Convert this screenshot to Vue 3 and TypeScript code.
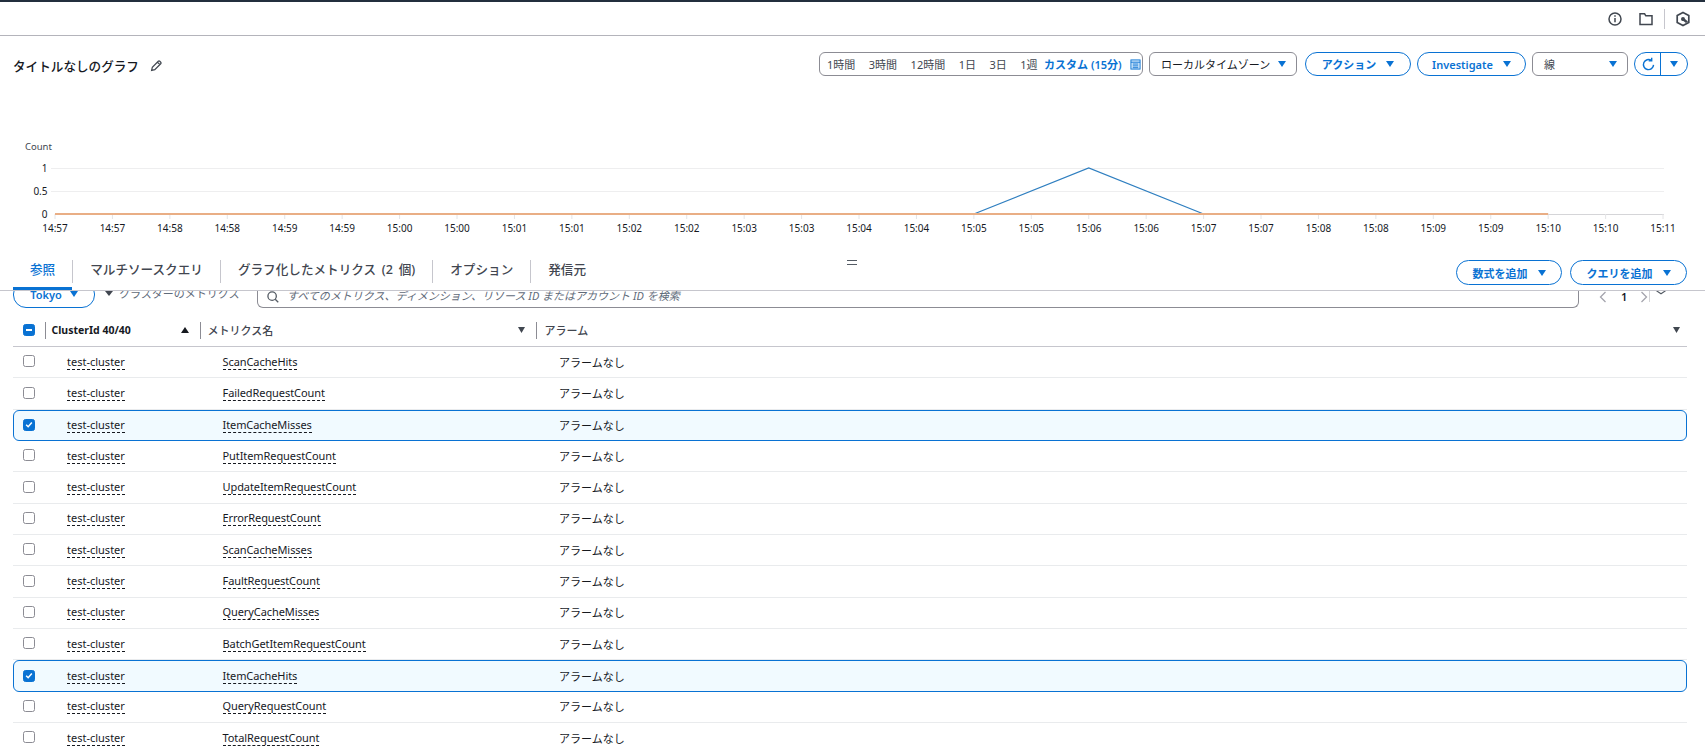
<script setup lang="ts">
const times = ['14:57','14:57','14:58','14:58','14:59','14:59','15:00','15:00','15:01','15:01','15:02','15:02','15:03','15:03','15:04','15:04','15:05','15:05','15:06','15:06','15:07','15:07','15:08','15:08','15:09','15:09','15:10','15:10','15:11']
const x0 = 55
const step = 57.43
const tickX = (i: number) => x0 + i * step
const ranges = ['1時間','3時間','12時間','1日','3日','1週']
const tabs = ['参照','マルチソースクエリ','グラフ化したメトリクス (2 個)','オプション','発信元']
const rows = [
  { m: 'ScanCacheHits' }, { m: 'FailedRequestCount' }, { m: 'ItemCacheMisses', s: true },
  { m: 'PutItemRequestCount' }, { m: 'UpdateItemRequestCount' }, { m: 'ErrorRequestCount' },
  { m: 'ScanCacheMisses' }, { m: 'FaultRequestCount' }, { m: 'QueryCacheMisses' },
  { m: 'BatchGetItemRequestCount' }, { m: 'ItemCacheHits', s: true }, { m: 'QueryRequestCount' },
  { m: 'TotalRequestCount' },
]
</script>

<template>
  <div class="page">
    <header class="topbar">
      <svg class="ico" viewBox="0 0 16 16"><circle cx="8" cy="8" r="6" /><path d="M8 7v4.2M8 4.2v1.6" /></svg>
      <svg class="ico" viewBox="0 0 16 16"><path d="M2 2.8h4.6l1.2 2H14v8.6H2z" /></svg>
      <span class="topdiv"></span>
      <svg class="ico hex" viewBox="0 0 16 16"><path d="M8 1.4l5.8 3.2v6.8L8 14.6l-5.8-3.2V4.6z" /><path class="hexfill" d="M6 8a2 2 0 0 1 4 0l3 2.4-2 1.6-2.6-2a2 2 0 0 1-2.400-2z" /></svg>
    </header>

    <section class="toolbar">
      <div class="title">
        <span>タイトルなしのグラフ</span>
        <svg class="pencil" viewBox="0 0 16 16"><path d="M3 13l.8-3.6 6.8-6.8a1.2 1.2 0 0 1 1.7 0l1.1 1.1a1.2 1.2 0 0 1 0 1.7l-6.8 6.8zM9.6 3.6l2.8 2.8" /></svg>
      </div>
      <div class="controls">
        <div class="seg">
          <span v-for="r in ranges" :key="r">{{ r }}</span>
          <b>カスタム (15分)</b>
          <svg class="cal" viewBox="0 0 12 12"><rect x="1" y="1" width="10" height="10" /><path d="M1 3.5h10M3 5.5h6M3 7.5h6M3 9.5h6" /></svg>
        </div>
        <div class="select tz">ローカルタイムゾーン<i class="caret"></i></div>
        <button class="btn action">アクション<i class="caret"></i></button>
        <button class="btn inv">Investigate<i class="caret"></i></button>
        <div class="select line"><span>線</span><i class="caret"></i></div>
        <div class="split">
          <span class="split-l">
            <svg class="refresh" viewBox="0 0 16 16"><path d="M13.4 8.4A5.4 5.4 0 1 1 11 3.6M11.4 .8v3.2H8.2" /></svg>
          </span>
          <span class="split-r"><i class="caret"></i></span>
        </div>
      </div>
    </section>

    <svg class="chart" viewBox="0 76 1705 172">
      <text x="25" y="150" class="count">Count</text>
      <line x1="51" x2="1664" y1="168.5" y2="168.5" class="grid" />
      <line x1="51" x2="1664" y1="191.5" y2="191.5" class="grid" />
      <line x1="55" x2="1664" y1="214.5" y2="214.5" class="axis" />
      <text x="47.5" y="171.5" class="yl">1</text>
      <text x="47.5" y="194.5" class="yl">0.5</text>
      <text x="47.5" y="217.5" class="yl">0</text>
      <line v-for="(t, i) in times" :key="'k' + i" :x1="tickX(i)" :x2="tickX(i)" y1="214" y2="219" class="tick" />
      <polyline :points="`${tickX(16)},214 ${tickX(18)},168 ${tickX(20)},214`" class="blue" />
      <line :x1="x0" :x2="tickX(26)" y1="214" y2="214" class="orange" />
      <text v-for="(t, i) in times" :key="'l' + i" :x="tickX(i)" y="232" class="xl">{{ t }}</text>
    </svg>

    <nav class="tabs">
      <div class="tablist">
        <div v-for="(t, i) in tabs" :key="t" class="tab" :class="{ on: i === 0, last: i === tabs.length - 1 }"><span>{{ t }}</span></div>
      </div>
      <span class="grip"></span>
      <div class="addbtns">
        <button class="btn add1">数式を追加<i class="caret"></i></button>
        <button class="btn add2">クエリを追加<i class="caret"></i></button>
      </div>
    </nav>

    <section class="filter">
      <button class="btn tokyo">Tokyo<i class="caret"></i></button>
      <div class="crumb"><i class="caret dark"></i>クラスターのメトリクス</div>
      <div class="search">
        <svg class="mag" viewBox="0 0 16 16"><circle cx="7" cy="7" r="4.8" /><path d="M10.5 10.5L14 14" /></svg>
        <span>すべてのメトリクス、ディメンション、リソース ID またはアカウント ID を検索</span>
      </div>
      <div class="pager">
        <svg class="chev" viewBox="0 0 8 12"><path d="M6.5 1L1.5 6l5 5" /></svg>
        <b>1</b>
        <svg class="chev" viewBox="0 0 8 12"><path d="M1.5 1l5 5-5 5" /></svg>
        <span class="pdiv"></span>
        <svg class="collapse" viewBox="0 0 14 8"><path d="M1 1l6 4 6-4" /></svg>
      </div>
    </section>

    <div class="thead">
      <div class="hcell c0"><span class="cb mixed"><i></i></span></div>
      <div class="hcell c1"><span class="hdiv"></span><strong>ClusterId 40/40</strong><i class="sort up"></i></div>
      <div class="hcell c2"><span class="hdiv"></span><span class="name">メトリクス名</span><i class="sort down"></i></div>
      <div class="hcell c3"><span class="hdiv"></span><span class="name">アラーム</span><i class="sort down end"></i></div>
    </div>

    <div v-for="r in rows" :key="r.m" class="row" :class="{ sel: r.s }">
      <div class="c0b">
        <span class="cb" :class="{ checked: r.s }">
          <svg v-if="r.s" viewBox="0 0 12 12"><path d="M2.6 6.2l2.4 2.4 4.4-5" /></svg>
        </span>
      </div>
      <div class="c1b"><span class="dash">test-cluster</span></div>
      <div class="c2b"><span class="dash">{{ r.m }}</span></div>
      <div class="c3b">アラームなし</div>
    </div>
  </div>
</template>

<style>
html, body { margin: 0; background: #fff; }
</style>

<style scoped>
.page {
  width: 1705px;
  height: 749px;
  overflow: hidden;
  background: #fff;
  color: #16191f;
  font-family: "Noto Sans", "Noto Sans CJK JP", sans-serif;
  font-size: 11px;
}
.topbar {
  box-sizing: border-box;
  height: 36px;
  border-top: 2px solid #232f3e;
  border-bottom: 1px solid #b4b4bb;
  display: flex;
  align-items: center;
  justify-content: flex-end;
  padding: 1px 14px 0 0;
  gap: 15px;
}
.ico { width: 16px; height: 16px; fill: none; stroke: #414750; stroke-width: 1.5; }
.hex { stroke-width: 1.7; }
.hexfill { fill: #414750; stroke: none; }
.topdiv { width: 1px; height: 20px; background: #c6c6cd; margin: 0 -5px; }
.toolbar {
  display: flex;
  justify-content: space-between;
  align-items: center;
  padding: 16px 17px 0 13px;
  height: 24px;
}
.title { display: flex; align-items: center; font-size: 12.6px; font-weight: 500; gap: 10px; padding-top: 3px; }
.pencil { width: 14px; height: 14px; fill: none; stroke: #414750; stroke-width: 1.4; }
.controls { display: flex; align-items: center; height: 24px; }
.seg {
  box-sizing: border-box;
  width: 324px;
  height: 24px;
  border: 1px solid #8c8c94;
  border-radius: 6px;
  display: flex;
  align-items: center;
  padding-left: 7px;
  gap: 13.5px;
  color: #414750;
  white-space: nowrap;
}
.seg b { color: #0972d3; font-weight: 600; margin-left: -7px; }
.cal { width: 11px; height: 11px; margin-left: -5.5px; fill: #d4e9fb; stroke: #0972d3; stroke-width: 1; flex: none; }
.select {
  box-sizing: border-box;
  height: 24px;
  border: 1px solid #8c8c94;
  border-radius: 6px;
  display: flex;
  align-items: center;
  justify-content: space-between;
  padding: 0 10px 0 11px;
}
.tz { width: 148px; margin-left: 6px; }
.line { width: 96px; margin-left: 6px; color: #414750; }
.btn {
  box-sizing: border-box;
  height: 24px;
  border: 1px solid #0972d3;
  border-radius: 13px;
  background: #fff;
  color: #0972d3;
  font-family: inherit;
  font-size: 11px;
  font-weight: 600;
  display: flex;
  align-items: center;
  justify-content: center;
  gap: 10px;
  padding: 0;
}
.action { width: 106px; margin-left: 8px; }
.inv { width: 109px; margin-left: 6px; }
.caret {
  display: inline-block;
  width: 0;
  height: 0;
  border-left: 4.5px solid transparent;
  border-right: 4.5px solid transparent;
  border-top: 6px solid #0972d3;
}
.caret.dark { border-top-color: #414750; border-left-width: 4px; border-right-width: 4px; border-top-width: 5px; }
.split {
  box-sizing: border-box;
  width: 54px;
  height: 24px;
  margin-left: 6px;
  border: 1px solid #0972d3;
  border-radius: 13px;
  display: flex;
}
.split-l { width: 26px; display: flex; align-items: center; justify-content: center; border-right: 1px solid #0972d3; padding-left: 1px; box-sizing: border-box; }
.split-r { flex: 1; display: flex; align-items: center; justify-content: center; }
.refresh { width: 15px; height: 15px; fill: none; stroke: #0972d3; stroke-width: 1.5; }
.chart { display: block; width: 1705px; height: 172px; font-family: "Noto Sans", sans-serif; }
.count { font-size: 9.5px; fill: #414750; }
.yl { font-size: 10px; fill: #16191f; text-anchor: end; }
.xl { font-size: 10px; fill: #16191f; text-anchor: middle; }
.grid { stroke: #eeeeef; stroke-width: 1; }
.axis { stroke: #d5d5d8; stroke-width: 1; }
.tick { stroke: #e4e4e6; stroke-width: 1; }
.blue { fill: none; stroke: #2f7fc0; stroke-width: 1.3; }
.orange { stroke: #e9ae85; stroke-width: 2; }
.tabs {
  position: relative;
  box-sizing: border-box;
  height: 43px;
  border-bottom: 1px solid #c6c6cd;
  display: flex;
  justify-content: space-between;
  padding: 0 18px 0 13px;
}
.tablist { display: flex; height: 42px; }
.tab {
  position: relative;
  box-sizing: border-box;
  padding: 12px 0 0;
  height: 42px;
}
.tab span {
  box-sizing: border-box;
  display: flex;
  align-items: center;
  height: 23px;
  padding: 0 17px 4px;
  border-right: 1px solid #c6c6cd;
  font-size: 12.6px;
  line-height: 15px;
  word-spacing: 2.5px;
  font-weight: 500;
  color: #424650;
}
.tab.last span { border-right: none; }
.tab.on span { color: #0972d3; }
.tab.on::after {
  content: "";
  position: absolute;
  left: 0;
  right: 1px;
  bottom: 0;
  height: 3px;
  background: #0972d3;
}
.grip {
  position: absolute;
  left: 847px;
  top: 12px;
  box-sizing: border-box;
  width: 10px;
  height: 5px;
  border-top: 1px solid #545b64;
  border-bottom: 1px solid #545b64;
}
.addbtns { display: flex; gap: 8px; padding-top: 12px; }
.add1 { width: 106px; height: 25px; }
.add2 { width: 117px; height: 25px; }
.filter {
  position: relative;
  height: 17px;
  overflow: hidden;
  display: flex;
  align-items: flex-end;
  padding-left: 13px;
}
.tokyo { width: 82px; height: 27px; flex: none; gap: 8px; padding-bottom: 1px; }
.crumb {
  display: flex;
  align-items: center;
  gap: 6px;
  color: #5f6b7a;
  margin-left: 10px;
  width: 152px;
  height: 22px;
  margin-bottom: 4px;
}
.search {
  box-sizing: border-box;
  width: 1322px;
  height: 30px;
  border: 1px solid #8c8c94;
  border-top: none;
  border-radius: 0 0 6px 6px;
  display: flex;
  align-items: flex-end;
  padding: 0 0 4px 8px;
  gap: 7px;
  color: #5f6b7a;
  font-style: italic;
  flex: none;
}
.mag { width: 14px; height: 14px; fill: none; stroke: #545b64; stroke-width: 1.5; margin-bottom: -1px; }
.pager {
  display: flex;
  align-items: flex-start;
  align-self: flex-start;
  height: 17px;
  margin-left: 20px;
}
.chev { width: 8px; height: 12px; fill: none; stroke: #a4a4ad; stroke-width: 1.3; }
.pager b { font-weight: 600; margin: -2px 13px 0 14px; font-size: 11px; }
.pdiv { width: 1px; height: 11px; background: #d5d5d8; margin-left: 1px; }
.collapse { width: 12px; height: 6px; fill: none; stroke: #545b64; stroke-width: 1.5; margin: -1px 0 0 5px; }
.thead {
  box-sizing: border-box;
  margin: 0 18px 0 13px;
  height: 39px;
  padding-top: 6px;
  display: grid;
  grid-template-columns: 31.5px 155.5px 336px 1fr;
  border-bottom: 1px solid #c6c6cd;
  align-items: center;
}
.hcell { display: flex; align-items: center; height: 24px; position: relative; font-weight: 500; color: #424650; }
.c0 { padding-left: 10px; }
.c1 { padding-left: 7px; }
.c1 strong { font-weight: 700; color: #16191f; font-size: 10.5px; }
.c2 { padding-left: 7.5px; }
.c3 { padding-left: 8.5px; }
.hdiv { position: absolute; left: 0; top: 4px; height: 17px; width: 1px; background: #8c8c94; }
.sort { position: absolute; width: 0; height: 0; top: 9px; }
.up { left: 136px; border-left: 4px solid transparent; border-right: 4px solid transparent; border-bottom: 6px solid #16191f; }
.down {
  left: 318px;
  width: 7px;
  height: 6px;
  background: #414750;
  clip-path: polygon(0 0, 100% 0, 50% 100%);
}
.end { left: auto; right: 7px; }
.row {
  box-sizing: border-box;
  margin: 0 18px 0 13px;
  height: 31.35px;
  padding-bottom: 1px;
  display: grid;
  grid-template-columns: 54px 155.5px 336.5px 1fr;
  align-items: center;
  border-bottom: 1px solid #e9ebed;
}
.row.sel {
  background: #f1faff;
  border: 1px solid #0972d3;
  border-radius: 6px;
  padding-bottom: 0;
}
.c0b { display: flex; padding-left: 10px; }
.row.sel .c0b { padding-left: 9px; }
.row.sel .c1b { margin-left: -1px; }
.row.sel .c2b { margin-left: -1px; }
.row.sel .c3b { margin-left: -1px; }
.c2b { letter-spacing: -0.08px; }
.cb {
  box-sizing: border-box;
  width: 12px;
  height: 12px;
  border: 1.5px solid #8c8c94;
  border-radius: 2.5px;
  background: #fff;
  display: flex;
  align-items: center;
  justify-content: center;
  margin-top: -1px;
}
.cb.checked { background: #0972d3; border-color: #0972d3; }
.cb.checked svg { width: 11px; height: 11px; fill: none; stroke: #fff; stroke-width: 1.8; }
.cb.mixed { background: #0972d3; border-color: #0972d3; margin-top: 0; }
.cb.mixed i { width: 6px; height: 1.5px; background: #fff; }
.dash { border-bottom: 1px dashed #16191f; line-height: 14px; display: inline-block; color: #16191f; }
.c3b { color: #16191f; }
</style>
